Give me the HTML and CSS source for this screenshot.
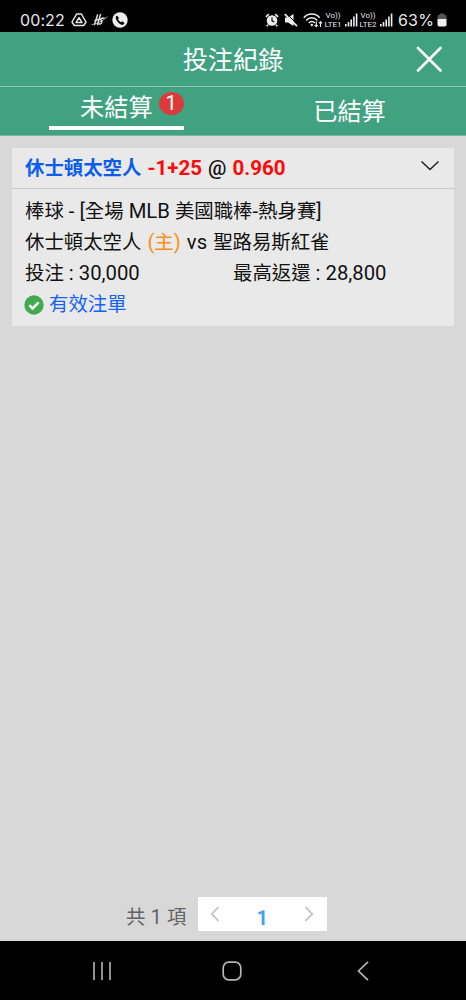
FILE: index.html
```html
<!DOCTYPE html>
<html lang="zh-Hant">
<head>
<meta charset="utf-8">
<title>投注紀錄</title>
<link rel="stylesheet" href="styles.css">
</head>
<body>
<div class="screen">
  <div class="status">
    <div class="status-left">
      <span class="time">00:22</span>
      <svg width="16" height="16" viewBox="0 0 16 16" fill="none" stroke="#e8e8e8" stroke-width="1.500" stroke-linejoin="round"><path d="M5.600 2h4.800L15 10l-2.300 3.500H3.300L1 10z"/><path d="M8 5.600 11 10.600H5z"/></svg>
      <svg width="17" height="16" viewBox="0 0 17 16" fill="none" stroke="#ddd" stroke-width="1.500" stroke-linecap="round"><path d="M6.500 3 3.500 12.500M9.500 2.500 6.500 12.500M4 8.500l5-1.500M13 6c-3.500 0-3.500 1.500-2.500 3S10 12.500 8 12"/><path d="M1 12.500C6 12 12 8.500 16 5" stroke-width=".8"/></svg>
      <svg width="16" height="16" viewBox="0 0 16 16"><circle cx="8" cy="8" r="7.700" fill="#eee"/><path d="M5 3.500c-1.500.8-1.500 2.500-.8 4 1 2.300 2.500 4 4.600 5 1.500.7 3 .3 3.700-1.300L10.400 9.300 9 10.300C7.600 9.500 6.600 8.300 6 6.900l1-1z" fill="#000"/></svg>
    </div>
    <div class="status-right">
      <svg width="14" height="14" viewBox="0 0 14 14"><circle cx="7" cy="7.500" r="5.300" fill="#eee"/><path d="M1 3.800 3.800 1.200M13 3.800 10.200 1.200M3 11.700l-1.300 1.500M11 11.700l1.300 1.500" stroke="#eee" stroke-width="1.700"/><path d="M7 4.300v3.500l2.300 1.200" stroke="#000" stroke-width="1.100" fill="none"/></svg>
      <svg class="mute" width="14" height="14" viewBox="0 0 14 14"><path d="M1 4.500h3L9.500 1v12L4 9.500H1z" fill="#eee"/><path d="M2.500.5 13.500 11.500" stroke="#000" stroke-width="1"/><path d="M.8 1.200 13 13.200" stroke="#eee" stroke-width="1.700"/></svg>
      <svg class="wifi" width="20" height="15" viewBox="0 0 20 15" fill="none" stroke="#eee" stroke-width="1.500"><path d="M.8 4.800C5-.2 12.500-.2 16.700 4.800M3.200 7.500c3-3.700 8-3.700 11 0M5.800 10c1.800-2.100 4.300-2.100 6 0"/><circle cx="8.800" cy="12" r="1.200" fill="#eee" stroke="none"/><path d="M13.300 8.500v5M11.700 12l1.600 1.700 1.500-1.700M17.500 14V8.700M16 10.300l1.500-1.700 1.600 1.700" stroke-width="1.100"/></svg>
      <span class="lte"><span>Vo))</span><span>LTE1</span></span>
      <svg class="signal" width="13" height="14" viewBox="0 0 13 14" fill="#eee"><path d="M0 11h1.600v2.500H0zM2.700 9h1.600v4.500H2.700zM5.400 6.500H7v7H5.400zM8.100 3.500h1.600v10H8.100zM10.800.5h1.600v13h-1.600z"/></svg>
      <span class="lte"><span>Vo))</span><span>LTE2</span></span>
      <svg class="signal" width="13" height="14" viewBox="0 0 13 14" fill="#eee"><path d="M0 11h1.600v2.500H0zM2.700 9h1.600v4.500H2.700zM5.400 6.500H7v7H5.400zM8.100 3.500h1.600v10H8.100zM10.800.5h1.600v13h-1.600z"/></svg>
      <span class="percent">63%</span>
      <svg class="battery" width="10" height="14" viewBox="0 0 10 14"><path d="M3 .5h4v1.300h1.200Q9.500 2 9.500 3.500V6H.5V3.500Q.5 2 1.800 1.800H3z" fill="#555"/><path d="M.5 6h9v5.700q0 1.800-1.800 1.800H2.300Q.5 13.500.5 11.700z" fill="#eee"/></svg>
    </div>
  </div>

  <header class="header">
    <h1 class="title">投注紀錄</h1>
    <svg class="close" width="26" height="26" viewBox="0 0 26 26" stroke="#fff" stroke-width="2.600" stroke-linecap="round"><path d="M2 2 24.500 24.500M24.500 2 2 24.500"/></svg>
  </header>
  <nav class="tabs">
    <div class="tab"><div class="tab-active"><span>未結算</span><span class="badge">1</span></div></div>
    <div class="tab">已結算</div>
  </nav>

  <main class="content">
    <section class="card">
      <div class="card-head">
        <div class="pick"><span class="blue">休士頓太空人</span><span class="latin"> <span class="red">-1+25</span> <span class="at">@</span> <span class="red">0.960</span></span></div>
        <svg width="20" height="12" viewBox="0 0 20 12" fill="none" stroke="#222" stroke-width="1.500"><path d="M1.500 1.500 10 9.500l8.500-8"/></svg>
      </div>
      <div class="card-body">
        <div class="row">棒球<span class="latin"> - [</span>全場<span class="latin"> MLB </span>美國職棒<span class="latin">-</span>熱身賽<span class="latin">]</span></div>
        <div class="row teams">休士頓太空人<span class="latin"> </span><span class="orange"><span class="latin">(</span>主<span class="latin">)</span></span><span class="latin"> vs </span>聖路易斯紅雀</div>
        <div class="row amounts"><span>投注<span class="latin"> : 30,000</span></span><span>最高返還<span class="latin"> : 28,800</span></span></div>
        <div class="row valid">
          <svg width="20" height="20" viewBox="0 0 20 20"><circle cx="10" cy="10" r="9.700" fill="#43aa4b"/><path d="M5.300 10.200 8.600 13.400 14.600 7.300" fill="none" stroke="#fff" stroke-width="2.500"/></svg>
          <span>有效注單</span>
        </div>
      </div>
    </section>
    <div class="pagination">
      <span class="total">共 1 項</span>
      <div class="pager">
        <svg width="10" height="16" viewBox="0 0 10 16" fill="none" stroke="#c4c4c4" stroke-width="1.800"><path d="M8.500 1.200 1.700 8l6.800 6.800"/></svg>
        <span class="page">1</span>
        <svg width="10" height="16" viewBox="0 0 10 16" fill="none" stroke="#c4c4c4" stroke-width="1.800"><path d="M1.500 1.200 8.300 8l-6.800 6.800"/></svg>
      </div>
    </div>
  </main>

  <footer class="system-nav">
    <svg width="20" height="20" viewBox="0 0 20 20" stroke="#aaa" stroke-width="1.700"><path d="M2 1v18M10 1v18M18 1v18"/></svg>
    <svg width="20" height="20" viewBox="0 0 20 20" fill="none" stroke="#b5b5b5" stroke-width="1.700"><rect x="1.200" y="1.200" width="17.600" height="17.600" rx="5.500"/></svg>
    <svg width="20" height="20" viewBox="0 0 20 20" fill="none" stroke="#b5b5b5" stroke-width="1.700"><path d="M16 .8 6.500 10l9.500 9.200"/></svg>
  </footer>
</div>
</body>
</html>
```
FILE: styles.css
```css
* { box-sizing: border-box; }
body {
  margin: 0;
  font-family: Roboto, "Noto Sans CJK TC", sans-serif;
  color: #111;
}
svg { display: block; flex: none; }
.screen { width: 466px; height: 1000px; display: flex; flex-direction: column; background: #d8d8d8; overflow: hidden; }

.status { height: 32px; flex: none; background: #000; color: #e8e8e8; display: flex; justify-content: space-between; padding: 8px 19px 0 20px; }
.status-left, .status-right { display: flex; align-items: center; height: 24px; }
.status-left { gap: 4px; }
.time { font-family: Inter, sans-serif; font-size: 16px; width: 47px; letter-spacing: 0.1px; }
.mute { margin-left: 5px; }
.wifi { margin-left: 5px; }
.lte { width: 18px; margin-left: 1px; margin-right: 1px; display: flex; flex-direction: column; align-items: center; font: 400 8px/9px Roboto, sans-serif; white-space: nowrap; }
.signal { margin-left: 2px; }
.percent { font-family: Inter, sans-serif; font-size: 16px; width: 37px; margin-left: 5px; letter-spacing: 0.2px; white-space: nowrap; }
.battery { margin-left: 2px; }

.header { height: 55px; flex: none; background: #41a281; border-bottom: 1px solid #8ec5b2; display: grid; grid-template-columns: 50px 1fr 50px; align-items: center; color: #fff; }
.title { grid-column: 2; margin: 3px 0 0; text-align: center; font-size: 25.200px; line-height: 36px; font-weight: 400; }
.tabs { height: 49px; flex: none; background: #41a281; border-bottom: 1px solid #7ab8a1; display: grid; grid-template-columns: 1fr 1fr; color: #fff; font-size: 24.200px; line-height: 51px; text-align: center; }
.tab-active { width: 135px; height: 43px; margin-left: 49px; padding-left: 31px; border-bottom: 4px solid #fff; line-height: 43px; display: flex; gap: 6px; white-space: nowrap; }
.badge { width: 25px; height: 23px; flex: none; margin-top: 5px; border-radius: 50%; background: #dc3b3b; font-size: 20px; line-height: 23px; }

.content { height: 805px; display: flex; flex-direction: column; justify-content: space-between; padding: 12px 12px 10px; }
.card { height: 178px; background: #e9e9e9; font-size: 19.400px; }
.card-head { height: 41px; border-bottom: 1px solid #cbcbcb; padding: 0 14px 0 13px; display: flex; justify-content: space-between; align-items: center; font-weight: 700; }
.card-head svg { margin-bottom: 5px; }
.pick { line-height: 30px; }
.latin { font-size: 20.300px; }
.pick .latin { font-size: 20.500px; word-spacing: 1px; }
.blue { color: #0b5dea; }
.red { color: #fa0a0a; }
.at { font-weight: 500; }
.orange { color: #f89019; }
.card-body { padding: 7px 13px 0; }
.row { height: 31px; line-height: 31px; white-space: nowrap; }
.teams { word-spacing: 1px; }
.amounts { display: grid; grid-template-columns: 208px 1fr; }
.valid { display: flex; align-items: center; gap: 5px; margin-left: -1px; color: #1463f2; }

.pagination { display: flex; align-items: center; gap: 12px; margin-left: 114px; color: #606266; font-size: 19.400px; }
.total { height: 34px; line-height: 42px; word-spacing: 0.5px; }
.pager { width: 129px; height: 34px; background: #fff; display: flex; justify-content: space-between; align-items: center; padding: 0 13px 0 12px; }
.pager svg { margin-bottom: 1px; }
.page { padding-top: 9px; color: #409eff; font-weight: 700; line-height: 26px; }

.system-nav { height: 59px; flex: none; background: #000; display: flex; gap: 110px; padding: 20px 0 0 92px; }
```
